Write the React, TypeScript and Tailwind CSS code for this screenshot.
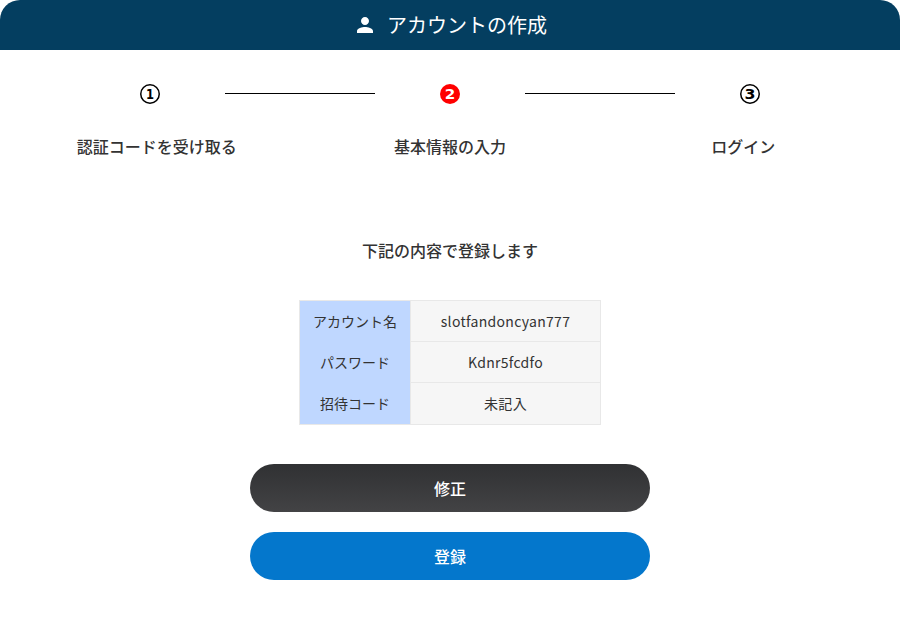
const steps = [
  { num: "1", label: "認証コードを受け取る", active: false, digitWidth: 8 },
  { num: "2", label: "基本情報の入力", active: true, digitWidth: 10.5 },
  { num: "3", label: "ログイン", active: false, digitWidth: 11 },
];

const rows = [
  { name: "アカウント名", value: "slotfandoncyan777", height: "h-[41px]" },
  { name: "パスワード", value: "Kdnr5fcdfo", height: "h-[41px]" },
  { name: "招待コード", value: "未記入", height: "h-[42px]" },
];

function PersonIcon() {
  return (
    <svg viewBox="0 0 24 24" className="w-6 h-6 fill-white">
      <path d="M12 12c2.21 0 4-1.79 4-4s-1.79-4-4-4-4 1.79-4 4 1.79 4 4 4zm0 2c-2.67 0-8 1.34-8 4v2h16v-2c0-2.66-5.33-4-8-4z" />
    </svg>
  );
}

function StepBadge({ num, active, digitWidth }: { num: string; active: boolean; digitWidth: number }) {
  return (
    <svg viewBox="0 0 20 20" className="w-5 h-5">
      <circle
        cx="10"
        cy="10"
        r={active ? 10 : 9.25}
        className={active ? "fill-[#f00]" : "fill-white stroke-black"}
        strokeWidth={active ? 0 : 1.5}
      />
      <text
        x="10"
        y="15"
        textAnchor="middle"
        textLength={digitWidth}
        lengthAdjust="spacingAndGlyphs"
        className={active ? "fill-white" : "fill-black"}
        fontFamily="'DejaVu Sans', sans-serif"
        fontWeight="bold"
        fontSize="14"
      >
        {num}
      </text>
    </svg>
  );
}

export default function App() {
  return (
    <div className="w-[900px] h-[622px] bg-white font-['Noto_Sans_CJK_JP',sans-serif] text-[#333]">
      <header className="h-[50px] bg-[#043e60] rounded-t-[20px] flex items-center justify-center gap-[10px] text-white text-[20px]">
        <PersonIcon />
        <span>アカウントの作成</span>
      </header>

      <div className="flex items-start pt-[34px] px-[75px]">
        {steps.map((s, i) => (
          <div key={s.num} className="contents">
            {i > 0 && <div className="w-[150px] h-px bg-black mt-[9px]" />}
            <div className="w-[150px] flex justify-center">
              <StepBadge num={s.num} active={s.active} digitWidth={s.digitWidth} />
            </div>
          </div>
        ))}
      </div>

      <div className="grid grid-cols-3 px-[10px] pt-[30px]">
        {steps.map((s) => (
          <div key={s.label} className="text-center text-[16px] font-medium leading-[24px]">
            {s.label}
          </div>
        ))}
      </div>

      <p className="text-center text-[16px] font-medium leading-[24px] mt-[80px]">下記の内容で登録します</p>

      <table className="mx-auto mt-[38px] border-collapse border border-[#e8e8e8] text-[14px] w-[302px]">
        <tbody>
          {rows.map((r) => (
            <tr key={r.name} className={r.height}>
              <th className="w-[111px] bg-[#bfd7ff] font-normal">{r.name}</th>
              <td className="bg-[#f6f6f6] border border-[#e8e8e8] text-center tracking-[0.3px]">{r.value}</td>
            </tr>
          ))}
        </tbody>
      </table>

      <div className="flex flex-col items-center gap-5 mt-[39px]">
        <button className="w-[400px] h-12 rounded-full bg-gradient-to-b from-[#303133] to-[#434345] text-white text-[16px] font-medium">
          修正
        </button>
        <button className="w-[400px] h-12 rounded-full bg-[#0477cc] text-white text-[16px] font-medium">登録</button>
      </div>
    </div>
  );
}
